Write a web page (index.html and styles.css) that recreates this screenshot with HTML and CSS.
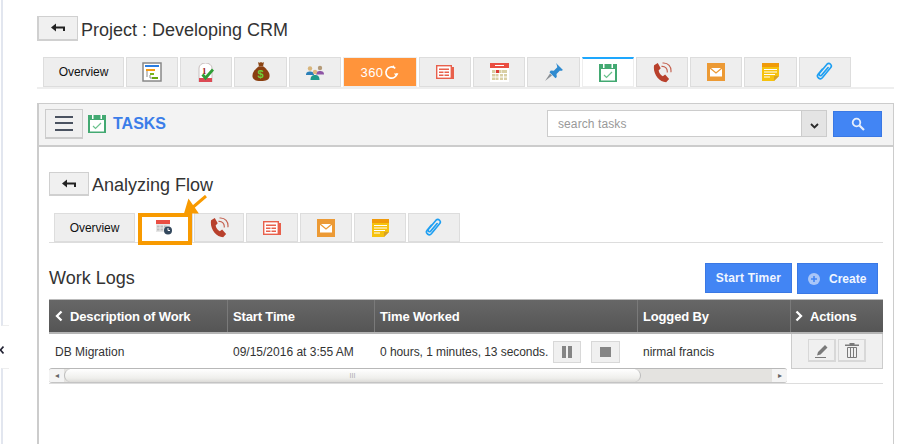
FILE: index.html
```html
<!DOCTYPE html>
<html lang="en">
<head>
<meta charset="utf-8">
<title>Project : Developing CRM</title>
<link rel="stylesheet" href="styles.css">
</head>
<body>
<svg class="defs" width="0" height="0" aria-hidden="true">
  <defs>
    <symbol id="i-back" viewBox="0 0 14 10"><path d="M0 4.5 5 .5v3h9v4.5h-2V5.5H5v3z" fill="#222"/></symbol>
    <symbol id="i-task" viewBox="0 0 18 18"><rect width="18" height="18" fill="#43a972"/><rect x="2" y="5" width="14" height="11.500" fill="#fff"/><rect x="4" y="0" width="1.500" height="4" fill="#fff"/><rect x="12.500" y="0" width="1.500" height="4" fill="#fff"/><path d="M5 11l2.500 2.500L13 8" fill="none" stroke="#6cc28e" stroke-width="1.200"/></symbol>
    <symbol id="i-news" viewBox="0 0 18 14"><path d="M15 2h3v12h-3z" fill="#e8604c"/><rect x=".7" y=".7" width="14.6" height="12.6" fill="#fff" stroke="#e8604c" stroke-width="1.4"/><path d="M3 3.5h10v1.5H3zM3 6.5h4.500V8H3zM8.500 6.500H13V8H8.500zM3 9.500h4.500V11H3zM8.500 9.500H13V11H8.500z" fill="#e8604c"/></symbol>
    <symbol id="i-phone" viewBox="0 0 18 20"><path d="M1 3 4.500 1l2.800 5L5.300 8c.6 2.600 2 4.300 4 5.500l2.200-1.500 3.800 4.300-2.800 3C5.500 19 -.5 11 1 3z" fill="#b8402c"/><path d="M8 4.200c3.600-.4 6 2.400 5.500 5.800M9 1c5.500-.6 8.700 3.800 8 8.800" fill="none" stroke="#c4604e" stroke-width="1.100"/></symbol>
    <symbol id="i-mail" viewBox="0 0 18 18"><rect width="18" height="18" fill="#ec9a35"/><rect x="3" y="5" width="12" height="8.500" fill="#fff"/><path d="M3 5l6 5 6-5" fill="none" stroke="#ec9a35" stroke-width="1.300"/></symbol>
    <symbol id="i-note" viewBox="0 0 17 18"><path d="M0 0h17v13l-5 5H0z" fill="#f6c20e"/><rect width="17" height="4" fill="#f09a0a"/><path d="M2 6h13v1H2zM2 8.500h13v1H2zM2 11h11v1H2zM2 13.500h6v1H2z" fill="#fff"/><path d="M17 13h-5v5z" fill="#d8a224"/></symbol>
    <symbol id="i-clip" viewBox="0 0 16 18"><path d="M5.500 6.500 1.800 11c-2 2.500 1.800 5.500 3.800 3.200l7.400-9C15 3 12 0 9.800 2L3 10.200c-1 1.500.8 2.800 2 1.600l5.800-6.800" fill="none" stroke="#1e9ff2" stroke-width="1.500" stroke-linecap="round"/></symbol>
  </defs>
</svg>
<div class="page">
  <aside class="edge">
    <div class="edge-top"></div>
    <div class="edge-mark"><svg width="4" height="8" viewBox="0 0 4 8"><path d="M3.500 .5 .5 4l3 3.500" fill="none" stroke="#223" stroke-width="1.600"/></svg></div>
    <div class="edge-bottom"></div>
  </aside>
  <main class="main">
    <div class="title-row">
      <button class="back-btn"><svg class="back-icon"><use href="#i-back"/></svg></button>
      <h1 class="heading">Project : Developing CRM</h1>
    </div>
    <nav class="tabs tabs-top">
      <div class="tab tab-text">Overview</div>
      <div class="tab">
        <svg width="20" height="20" viewBox="0 0 20 20"><rect x="1" y="1" width="18" height="18" fill="#fff" stroke="#888" stroke-width="1.500"/><rect x="3" y="3" width="14" height="2" fill="#2a7de1"/><rect x="4" y="7" width="9" height="2" fill="#f59a12"/><rect x="8" y="11" width="4" height="2" fill="#7ab51d"/><rect x="10" y="15" width="6" height="2" fill="#6aa811"/><path d="M5 9v6M8 13v3h2" fill="none" stroke="#8a8a8a"/></svg>
      </div>
      <div class="tab">
        <svg width="16" height="19" viewBox="0 0 16 19"><path d="M1 5a6.500 5 0 0 1 13 0v14H1z" fill="#fff" stroke="#c9c0c0"/><rect x="1" y="15" width="13" height="4" fill="#dc4a55"/><text class="mini-num" x="4" y="10.500">1</text><path d="M4.500 11.500 7.500 15 15 6.500" fill="none" stroke="#2f9e37" stroke-width="2.800"/></svg>
      </div>
      <div class="tab tab-lg">
        <svg width="18" height="20" viewBox="0 0 18 20"><path d="M6 0c1 1 2 .8 3 0 1 .8 2 1 3 0l-1 4.500H7z" fill="#8b4513"/><path d="M6.500 4.500h5C15 7.500 18 10.500 17.500 14.500 17 18 14 19 9 19s-8-1-8.500-4.500C0 10.500 3 7.500 6.500 4.500z" fill="#8a3f10"/><text class="mini-dollar" x="5.500" y="15.500">$</text></svg>
      </div>
      <div class="tab">
        <svg width="20" height="15" viewBox="0 0 20 15"><circle cx="5" cy="3.500" r="2.200" fill="#d8b57c"/><circle cx="15" cy="3" r="2.200" fill="#b49a78"/><path d="M1 10c0-3 2-3.500 4-3.500S9 7 9 10z" fill="#2a7fb8"/><path d="M11 9.500C11 6.500 13 6 15 6s4 .5 4 3.500z" fill="#8e55a5"/><circle cx="10" cy="7" r="2.200" fill="#e0b880"/><path d="M5.500 15c0-4 2-5 4.500-5s4.500 1 4.500 5z" fill="#1e9a8a"/></svg>
      </div>
      <div class="tab tab-360">
        <span class="label-360">360</span>
        <svg width="15" height="15" viewBox="0 0 16 16"><path d="M12 3.500A6 6 0 1 0 14 9" fill="none" stroke="#fff" stroke-width="1.800"/><path d="M10.500 9h5l-2.500 3z" fill="#fff"/><circle cx="10" cy="1.500" r="1" fill="#fff"/></svg>
      </div>
      <div class="tab"><svg width="18" height="14"><use href="#i-news"/></svg></div>
      <div class="tab">
        <svg width="19" height="19" viewBox="0 0 19 19"><rect y="0" width="19" height="19" fill="#fff"/><rect width="19" height="5" fill="#ea4e42"/><rect x="5" y="2" width="9" height="1" fill="#fff"/><path d="M2 7h3v3H2zM8 7h3v3H8zM14 7h3v3h-3zM2 11h3v2.500H2zM5.500 11h3v2.500h-3zM10 11h3v2.500h-3zM14 11h3v2.500h-3zM2 14.500h3V17H2zM5.500 14.500h3V17h-3zM10 14.500h3V17h-3zM14 14.500h3V17h-3zM5.500 7h2.500v3H5.500zM11.500 7H14v3h-2.500z" fill="#d9cfa4"/><rect x="6" y="7" width="3" height="3" fill="#dc3a35"/></svg>
      </div>
      <div class="tab tab-lg">
        <svg width="20" height="20" viewBox="0 0 20 20"><path d="M12 1l7 7-2 1-1-.5-3.500 3.500.3 3-1.300 1.300-6-6L6.800 8.500l3 .3L13.300 5.300 12.800 3z" fill="#2f8bd0"/><path d="M6 11.500 1 19l7-5.500z" fill="#8a8f94"/></svg>
      </div>
      <div class="tab tab-active"><svg width="18" height="18"><use href="#i-task"/></svg></div>
      <div class="tab"><svg width="19" height="21"><use href="#i-phone"/></svg></div>
      <div class="tab"><svg width="18" height="18"><use href="#i-mail"/></svg></div>
      <div class="tab tab-lg"><svg width="17" height="18"><use href="#i-note"/></svg></div>
      <div class="tab"><svg width="18" height="20"><use href="#i-clip"/></svg></div>
    </nav>
    <div class="tabs-rule"></div>
    <section class="panel">
      <header class="panel-head">
        <button class="menu-btn"><span class="bar"></span><span class="bar"></span><span class="bar"></span></button>
        <svg class="task-icon" width="18" height="18"><use href="#i-task"/></svg>
        <span class="panel-title">TASKS</span>
        <div class="search">
          <input class="search-input" placeholder="search tasks">
          <span class="search-drop"><svg width="9" height="6" viewBox="0 0 9 6"><path d="M1 1l3.500 3.500L8 1" fill="none" stroke="#2a2a2a" stroke-width="1.800"/></svg></span>
        </div>
        <button class="search-btn"><svg width="14" height="14" viewBox="0 0 14 14"><circle cx="5.500" cy="5.500" r="3.800" fill="none" stroke="#e6eefc" stroke-width="1.800"/><path d="M8.500 8.500 13 13" stroke="#e6eefc" stroke-width="2.200"/></svg></button>
      </header>
      <div class="panel-body">
        <div class="sub-title-row">
          <button class="back-btn back-btn-sub"><svg class="back-icon"><use href="#i-back"/></svg></button>
          <h2 class="heading">Analyzing Flow</h2>
        </div>
        <nav class="tabs tabs-sub">
          <div class="tab tab-text">Overview</div>
          <div class="tab tab-clock">
            <svg width="17" height="15" viewBox="0 0 17 15"><rect y="0" width="14" height="12" fill="#e6e6e6"/><rect width="14" height="4" fill="#ea4e42"/><path d="M1 5.500h2.500v2H1zM4.500 5.500H7v2H4.500zM8 5.500h2.500v2H8zM1 8.500h2.500v2H1zM4.500 8.500H7v2H4.500z" fill="#bdbdbd"/><circle cx="12" cy="10.500" r="4" fill="#34495e"/><path d="M12 8v2.500h2" fill="none" stroke="#fff"/></svg>
            <span class="highlight"></span>
            <svg class="pointer" width="24" height="24" viewBox="0 0 24 24"><path d="M23 1 9 13M13 17H3l3-10z" fill="#f89a00" stroke="#f89a00" stroke-width="3"/></svg>
          </div>
          <div class="tab tab-phone"><svg width="19" height="21"><use href="#i-phone"/></svg></div>
          <div class="tab"><svg width="18" height="14"><use href="#i-news"/></svg></div>
          <div class="tab"><svg width="18" height="18"><use href="#i-mail"/></svg></div>
          <div class="tab"><svg width="17" height="18"><use href="#i-note"/></svg></div>
          <div class="tab"><svg width="18" height="20"><use href="#i-clip"/></svg></div>
        </nav>
        <div class="logs-bar">
          <h3 class="heading heading-logs">Work Logs</h3>
          <div class="logs-actions">
            <button class="primary">Start Timer</button>
            <button class="primary primary-create">
              <svg width="12" height="12" viewBox="0 0 12 12"><circle cx="6" cy="6" r="6" fill="#a9c6f8"/><path d="M6 3v6M3 6h6" stroke="#4285f4" stroke-width="1.600"/></svg>
              <span>Create</span>
            </button>
          </div>
        </div>
        <div class="grid grid-head">
          <div class="th"><svg class="chev" width="8" height="12" viewBox="0 0 8 12"><path d="M6.500 1.500 2 6l4.500 4.500" fill="none" stroke="#fff" stroke-width="2.300"/></svg>Description of Work</div>
          <div class="th">Start Time</div>
          <div class="th">Time Worked</div>
          <div class="th">Logged By</div>
          <div class="th th-last"><svg class="chev" width="8" height="12" viewBox="0 0 8 12"><path d="M1.500 1.500 6 6l-4.500 4.500" fill="none" stroke="#fff" stroke-width="2.300"/></svg>Actions</div>
        </div>
        <div class="grid grid-row">
          <div class="td td-first">DB Migration</div>
          <div class="td">09/15/2016 at 3:55 AM</div>
          <div class="td td-time">0 hours, 1 minutes, 13 seconds.
            <button class="mini-btn"><svg width="10" height="12" viewBox="0 0 10 12"><path d="M0 0h4v12H0zM6 0h4v12H6z" fill="#858585"/></svg></button>
            <button class="mini-btn mini-stop"><svg width="11" height="10" viewBox="0 0 11 10"><rect width="11" height="10" fill="#858585"/></svg></button>
          </div>
          <div class="td">nirmal francis</div>
          <div class="td-actions">
            <button class="act-btn"><svg width="14" height="15" viewBox="0 0 14 15"><path d="M3 9l7-7 2.500 2.500-7 7L2 12.500zM0 14h11v1H0z" fill="#7a7a7a"/></svg></button>
            <button class="act-btn"><svg width="14" height="15" viewBox="0 0 14 15"><path d="M4.500 0h5v1.500H14V3H0V1.500h4.500z" fill="#7a7a7a"/><path d="M2.500 4.500h9v10h-9zM5.500 4.500v10M8.500 4.500v10" fill="none" stroke="#7a7a7a"/></svg></button>
          </div>
        </div>
        <div class="scroll-row">
          <div class="scrollbar">
            <span class="sb-end">&#9666;</span>
            <div class="sb-thumb"><span class="sb-grip">III</span></div>
            <div class="sb-track"></div>
            <span class="sb-end">&#9656;</span>
          </div>
        </div>
      </div>
    </section>
  </main>
</div>
</body>
</html>
```

FILE: styles.css
```css
* { box-sizing: border-box; }
html, body { margin: 0; height: 444px; overflow: hidden; background: #fff; }
body { font-family: "Liberation Sans", Arial, sans-serif; color: #333; font-size: 12px; }
.defs { position: absolute; }
button { font-family: inherit; padding: 0; cursor: pointer; }
.page { display: flex; height: 444px; }

.edge { width: 37px; flex: none; }
.edge-top { margin-left: 1px; width: 8px; height: 326px; border-left: 2px solid #e2e6ef; border-bottom: 1px solid #eee; }
.edge-mark { width: 4px; height: 42px; padding-top: 20px; }
.edge-mark svg { display: block; }
.edge-bottom { margin-left: 1px; width: 8px; height: 76px; border-left: 2px solid #e2e6ef; border-top: 1px solid #eee; }

.main { width: 857px; flex: none; padding-top: 16px; }
.title-row { display: flex; align-items: center; gap: 3px; height: 25px; }
.heading { margin: 0; padding-top: 2px; font-size: 18px; font-weight: 400; color: #333; line-height: 24px; }
.heading-logs { padding-top: 0; margin-bottom: 2px; }
.back-btn { width: 41px; height: 25px; background: #f0f0f0; border: 1px solid #d0d0d0; border-width: 1px 1px 2px 2px; display: flex; align-items: center; justify-content: center; }
.back-btn-sub { width: 40px; height: 24px; border-width: 1px 1px 2px 1px; }
.back-icon { width: 14px; height: 10px; }

.tabs { display: flex; gap: 2px; }
.tabs-top { margin: 16px 0 0 6px; }
.tab { width: 52px; height: 30px; background: #eee; border: 1px solid #ddd; display: flex; align-items: center; justify-content: center; }
.tab-lg { width: 53px; }
.tab-text { width: 81px; color: #111; font-size: 12px; letter-spacing: -.05px; }
.tab-360 { width: 74px; background: #ff943b; border-color: #ededed; gap: 0; color: #fff; }
.label-360 { font-size: 13px; letter-spacing: .4px; margin-right: 1px; }
.tab-active { background: #fff; border-color: #eee; border-top: 2px solid #1ea7fd; }
.tabs-rule { height: 2px; background: #eee; }
.mini-num { font: bold 9px "Liberation Serif", serif; fill: #a02020; }
.mini-dollar { font: bold 11px "Liberation Sans", sans-serif; fill: #6fce3a; }

.panel { margin-top: 14px; height: 360px; border: 1px solid #ccc; border-left-width: 2px; border-bottom: 0; }
.panel-head { height: 43px; display: flex; align-items: center; background: #f3f3f3; border-bottom: 2px solid #ccc; padding: 0 11px 4px 6px; }
.menu-btn { width: 38px; height: 30px; background: #f0f0f0; border: 1px solid #ccc; border-width: 1px 1px 2px 1px; display: flex; flex-direction: column; align-items: center; justify-content: center; gap: 4.500px; margin-top: 2px; }
.bar { display: block; width: 18px; height: 2px; background: #4a5260; }
.task-icon { margin: 2px 0 0 5px; }
.panel-title { margin: 2px 0 0 7px; font-size: 16px; font-weight: 700; color: #3b7de9; }
.search { margin: 2px 0 0 auto; display: flex; height: 27px; }
.search-input { width: 255px; height: 27px; border: 1px solid #ccc; padding: 0 10px; font: 12px "Liberation Sans", sans-serif; outline: none; background: #fff; }
.search-input::placeholder { color: #999; opacity: 1; letter-spacing: .1px; }
.search-drop { width: 25px; background: #e4e4e4; border: 1px solid #ccc; border-left: 0; display: flex; align-items: center; justify-content: center; padding-top: 5px; }
.search-btn { margin: 2px 0 0 6px; width: 49px; height: 26px; background: #4285f4; border: 1px solid #3a78e4; display: flex; align-items: center; justify-content: center; }

.panel-body { padding: 25px 10px 0; }
.sub-title-row { display: flex; align-items: center; gap: 3px; height: 24px; }
.tabs-sub { margin-top: 17px; padding-left: 5px; height: 30px; border-bottom: 1px solid #ddd; }
.tabs-sub .tab { height: 29px; }
.tab-clock { position: relative; width: 55px; background: #fff; margin-left: 1px; padding-right: 2px; }
.tab-phone { width: 50px; margin-left: -1px; }
.highlight { position: absolute; left: -1px; top: -1px; width: 54px; height: 32px; border: 4px solid #f89a00; }
.pointer { position: absolute; left: 44px; top: -19px; }

.logs-bar { display: flex; align-items: center; justify-content: space-between; margin-top: 20px; height: 31px; padding-right: 5px; }
.logs-actions { display: flex; gap: 5px; align-items: flex-start; }
.primary { height: 30px; width: 87px; background: #4285f4; border: 1px solid #3a78e4; color: #f0f5ff; font-size: 12px; font-weight: 700; letter-spacing: .2px; }
.primary-create { width: 81px; height: 31px; display: flex; align-items: center; gap: 9px; padding-left: 10px; letter-spacing: 0; }

.grid { display: grid; grid-template-columns: 179px 147px 263px 153px 92px; width: 834px; }
.grid-head { margin-top: 5px; height: 35px; background: linear-gradient(#676767, #555); border-top: 1px solid #bbb; border-bottom: 2px solid #b5b5b5; }
.th { display: flex; align-items: center; padding-left: 5px; color: #fff; font-size: 13px; font-weight: 700; letter-spacing: -.15px; border-right: 1px solid #7a7a7a; }
.th-last { border-right: 0; padding-left: 3px; }
.chev { margin: 0 7px 0 1px; flex: none; }
.th-last .chev { margin-right: 7px; }
.grid-row { height: 35px; }
.td { display: flex; align-items: center; padding: 0 0 0 5px; color: #333; font-size: 12px; white-space: nowrap; }
.td-first { padding-left: 6px; }
.td-time { letter-spacing: -.06px; }
.mini-btn { width: 28px; height: 22px; margin: 0 0 0 5px; background: #f0f0f0; border: 1px solid #d8d8d8; display: flex; align-items: center; justify-content: center; }
.mini-stop { width: 29px; margin-left: 10px; }
.td-actions { background: #f0f0f0; border: 1px solid #ccc; border-top: 0; display: flex; gap: 2px; padding: 5px 0 0 16px; }
.act-btn { width: 28px; height: 23px; background: #f0f0f0; border: 2px solid #d8d8d8; display: flex; align-items: center; justify-content: center; border-width: 1px 2px 2px 1px; }

.scroll-row { width: 834px; height: 16px; border-bottom: 1px solid #ddd; margin-top: -1px; }
.scrollbar { width: 738px; height: 15px; display: flex; align-items: center; background: #e4e3e0; border-top: 1px solid #b8b8b8; border-bottom: 1px solid #c4c4c4; border-radius: 3px; overflow: hidden; }
.sb-end { width: 15px; height: 100%; flex: none; background: #f4f4f4; color: #666; font-size: 8px; line-height: 13px; text-align: center; }
.sb-thumb { width: 577px; height: 100%; flex: none; background: linear-gradient(#fff, #efefec 70%, #dcdbd8); border: 1px solid #bbb; border-width: 0 1px; border-radius: 7px; text-align: center; }
.sb-grip { font-size: 7px; line-height: 13px; color: #aaa; letter-spacing: 0; display: block; }
.sb-track { flex: 1; height: 100%; background: #e4e3e0; }
```
